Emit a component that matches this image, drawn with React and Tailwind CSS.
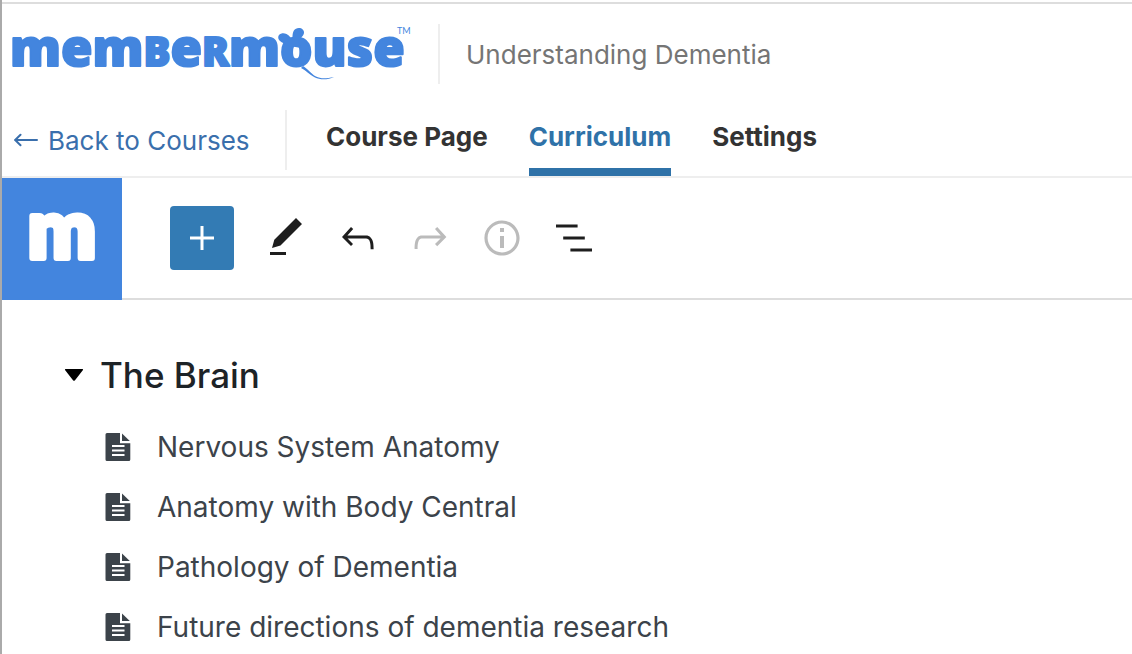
const lessons = [
  'Nervous System Anatomy',
  'Anatomy with Body Central',
  'Pathology of Dementia',
  'Future directions of dementia research',
];

function Wordmark() {
  return (
    <svg className="h-[92px] w-[406px] shrink-0 overflow-visible" viewBox="0 0 406 92" role="img" aria-label="MemberMouse">
      <g fill="#4385de" stroke="#4385de">
        <text x="0" y="58" fontFamily="Open Sans, sans-serif" fontWeight="800" fontSize="51" strokeWidth="2" strokeLinejoin="round">
          mem<tspan fontSize="40">B</tspan>e<tspan fontSize="40">R</tspan>mouse
        </text>
        <g stroke="none">
          <path d="M279 38c-3-3-9-3-10.500-7-1.500-5 4-7 8-5 3 1.500 4 4 6 5 0-4 0-8 3-10 4-2.500 9 0 8.500 4-.500 4-5 5-5.500 9l3 6z" />
          <path d="M293 58c4 2 8 8 13 10.500 5 2.500 10 2 18 .500-6 3-14 3-19 .500-6-3-9-7-14-9.500z" />
        </g>
        <text x="387" y="26" fontFamily="Lato, sans-serif" fontSize="9" stroke="none">TM</text>
      </g>
    </svg>
  );
}

function EditIcon() {
  return (
    <svg className="size-12" viewBox="0 0 48 48" fill="currentColor" aria-hidden="true">
      <path d="M10 34l2.300-8.200L34 4l6 6-21.500 21.500zM8 38h16v3H8z" />
    </svg>
  );
}

function ToolIcon({ d }) {
  return (
    <svg className="size-12" viewBox="0 0 24 24" fill="currentColor" aria-hidden="true">
      <path d={d} />
    </svg>
  );
}

const undo =
  'M18.3 11.7c-.6-.6-1.4-.9-2.3-.9H6.7l2.9-3.3-1.1-1-4.5 5L8.5 16l1-1-2.7-2.7H16c.5 0 .9.2 1.3.5 1 1 1 3.4 1 4.5v.3h1.5v-.2c0-1.5 0-4.3-1.5-5.7z';
const redo =
  'M15.6 6.5l-1.1 1 2.9 3.3H8c-.9 0-1.7.3-2.3.9-1.4 1.5-1.4 4.2-1.4 5.6v.2h1.5v-.3c0-1.1 0-3.5 1-4.5.3-.3.7-.5 1.3-.5h9.2L14.5 15l1.1 1.1 4.6-4.6-4.6-5z';
const info =
  'M12 3.2c-4.8 0-8.8 3.9-8.8 8.8 0 4.8 3.9 8.8 8.8 8.8 4.8 0 8.8-3.9 8.8-8.8 0-4.8-4-8.8-8.8-8.8zm0 16c-4 0-7.2-3.3-7.2-7.2C4.8 8 8 4.8 12 4.8s7.2 3.3 7.2 7.2c0 4-3.2 7.2-7.2 7.2zM11 17h2v-6h-2v6zm0-8h2V7h-2v2z';
const outline =
  'M3 5.2h10.8v1.5H3zM6.6 11.25h10.8v1.5H6.6zM10.2 17.25H21v1.5H10.2z';

function FileIcon() {
  return (
    <svg className="h-[30px] w-[26px] shrink-0" viewBox="0 0 26 30" fill="#3c434a" aria-hidden="true">
      <path
        fillRule="evenodd"
        d="M2 1h13v10.300h10.300V27.500a1.500 1.500 0 0 1-1.500 1.500H2A1.500 1.500 0 0 1 .5 27.500v-25A1.500 1.500 0 0 1 2 1zM7 13v2h12.500v-2zM7 17.500v2h12.500v-2zM7 22v2h12.500v-2z"
      />
      <path d="M17 1.500L24.800 9H17z" />
    </svg>
  );
}

export default function App() {
  return (
    <div className="min-h-screen border-l-2 border-[#aaa] bg-white font-['Inter',sans-serif]">
      <div className="h-0.5" />
      <header className="border-t-2 border-[#ddd]">
        <div className="flex h-[100px] items-center pl-2">
          <Wordmark />
          <div className="ml-[22px] h-[60px] w-0.5 bg-[#eee]" />
          <p className="ml-[26px] pt-0.5 text-[26px] leading-8 text-[#757575]">Understanding Dementia</p>
        </div>
        <div className="flex h-[74px] items-stretch border-b-2 border-[#eee]">
          <a href="#courses" className="flex w-[283px] shrink-0 items-center gap-2.5 pl-3 pt-0.5 text-[26px] leading-8 text-[#3a6fac]">
            <svg className="h-4 w-6" viewBox="0 0 24 16" fill="none" stroke="currentColor" strokeWidth="2" strokeLinecap="round" strokeLinejoin="round" aria-hidden="true">
              <path d="M23 7H1M6.500 1.800L1.200 7l5.300 5.200" />
            </svg>
            Back to Courses
          </a>
          <div className="mt-1.5 h-[60px] w-0.5 bg-[#eee]" />
          <nav className="ml-[39px] flex gap-[41px] text-[26px] font-bold leading-8 text-[#333]">
            <a href="#page" className="pt-[17px]">Course Page</a>
            <a href="#curriculum" aria-current="page" className="border-b-8 border-[#2f72a8] pt-[17px] text-[#2f72a8]">Curriculum</a>
            <a href="#settings" className="pt-[17px]">Settings</a>
          </nav>
        </div>
      </header>

      <div className="flex h-[122px]">
        <a href="#home" aria-label="MemberMouse home" className="flex w-[120px] shrink-0 items-center justify-center bg-[#4385de]">
          <svg className="h-[120px] w-24" viewBox="0 0 96 120" aria-hidden="true">
            <text x="48" y="79" textAnchor="middle" fontFamily="Lato, sans-serif" fontWeight="900" fontSize="81" fill="#fff" stroke="#fff" strokeWidth="6" strokeLinejoin="round">m</text>
          </svg>
        </a>
        <div className="flex grow items-center gap-6 border-b-2 border-[#ddd] pl-12 text-[#1e1e1e]">
          <button type="button" aria-label="Add block" className="mr-1 flex size-16 items-center justify-center rounded bg-[#337bb4] text-white">
            <ToolIcon d="M11.25 6h1.5v5.250H18v1.500h-5.250V18h-1.500v-5.250H6v-1.500h5.250z" />
          </button>
          <button type="button" aria-label="Edit"><EditIcon /></button>
          <button type="button" aria-label="Undo"><ToolIcon d={undo} /></button>
          <button type="button" aria-label="Redo" className="text-[#bbb]"><ToolIcon d={redo} /></button>
          <button type="button" aria-label="Details" className="text-[#bbb]"><ToolIcon d={info} /></button>
          <button type="button" aria-label="Outline"><ToolIcon d={outline} /></button>
        </div>
      </div>

      <main className="pl-[62px] pt-[51px]">
        <h2 className="text-[35px] font-medium leading-12 text-[#1d2327]">
          <button type="button" aria-expanded="true" className="flex items-center gap-4">
            <svg className="h-3 w-5" viewBox="0 0 20 12" aria-hidden="true">
              <path d="M1.500 0h17q1 .300.300 1.200L11 11.300q-1 1-2 0L1.200 1.200Q.500.300 1.500 0z" />
            </svg>
            The Brain
          </button>
        </h2>
        <ul className="mt-[18px] pl-[41px]">
          {lessons.map((title) => (
            <li key={title} className="flex h-[60px] items-center gap-[26px] text-[28px] leading-9 text-[#3c434a]">
              <FileIcon />
              {title}
            </li>
          ))}
        </ul>
      </main>
    </div>
  );
}
